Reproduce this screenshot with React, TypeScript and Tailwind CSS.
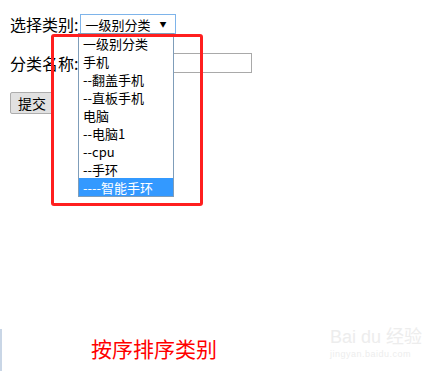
export default function App() {
  const options = ['一级别分类', '手机', '--翻盖手机', '--直板手机', '电脑', '--电脑1', '--cpu', '--手环', '----智能手环'];
  return (
    <div
      className="relative w-[447px] h-[371px] bg-white text-black overflow-hidden"
      style={{ fontFamily: '"Noto Sans CJK SC", "Noto Sans", sans-serif' }}
    >
      <div className="flex flex-col pl-[10px] pt-[14px]">
        <div className="flex items-center h-[20px]">
          <span className="text-[16px] leading-none">选择类别:</span>
          <div className="ml-[2px] w-[96px] h-[20px] border border-[#7eb4ea] flex items-center justify-between pl-[4px] pr-[9px] text-[13px] leading-none">
            <span>一级别分类</span>
            <span className="text-[7px]">▼</span>
          </div>
        </div>
        <div className="flex items-center h-[20px] mt-[19px]">
          <span className="text-[16px] leading-none">分类名称:</span>
          <div className="ml-[2px] w-[172px] h-[20px] border border-[#a9a9a9]" />
        </div>
        <div className="mt-[17px]">
          <button className="h-[22px] px-[7px] border border-[#adadad] bg-[#e1e1e1] rounded-[2px] text-[14px] leading-none">
            提交
          </button>
        </div>
      </div>

      <div className="absolute left-[78px] top-[33px] w-[96px] border border-[#7f9db9] bg-white">
        {options.map((o, i) => (
          <div
            key={o}
            className={
              i === options.length - 1
                ? 'h-[18px] flex items-center px-[4px] text-[13px] leading-none bg-[#3399ff] text-white'
                : 'h-[18px] flex items-center px-[4px] text-[13px] leading-none'
            }
          >
            {o}
          </div>
        ))}
      </div>

      <div className="absolute left-[51px] top-[34px] w-[152px] h-[172px] border-[3px] border-[#ff1f1f] rounded-[3px]" />

      <div className="absolute left-0 top-[329px] w-[2px] h-[42px] bg-[#c9d6e6]" />

      <div className="absolute left-[91px] top-[338px] text-[21px] leading-none text-[#ff0000]">按序排序类别</div>

      <div className="absolute left-[330px] top-[328px] flex flex-col items-start text-[#ededed]">
        <span className="text-[18px] leading-none" style={{ fontFamily: '"Liberation Sans", "Noto Sans CJK SC", sans-serif' }}>
          Bai du 经验
        </span>
        <span className="text-[9px] leading-none mt-[4px] tracking-[0.5px]" style={{ fontFamily: '"Liberation Sans", sans-serif' }}>
          jingyan.baidu.com
        </span>
      </div>
    </div>
  );
}
